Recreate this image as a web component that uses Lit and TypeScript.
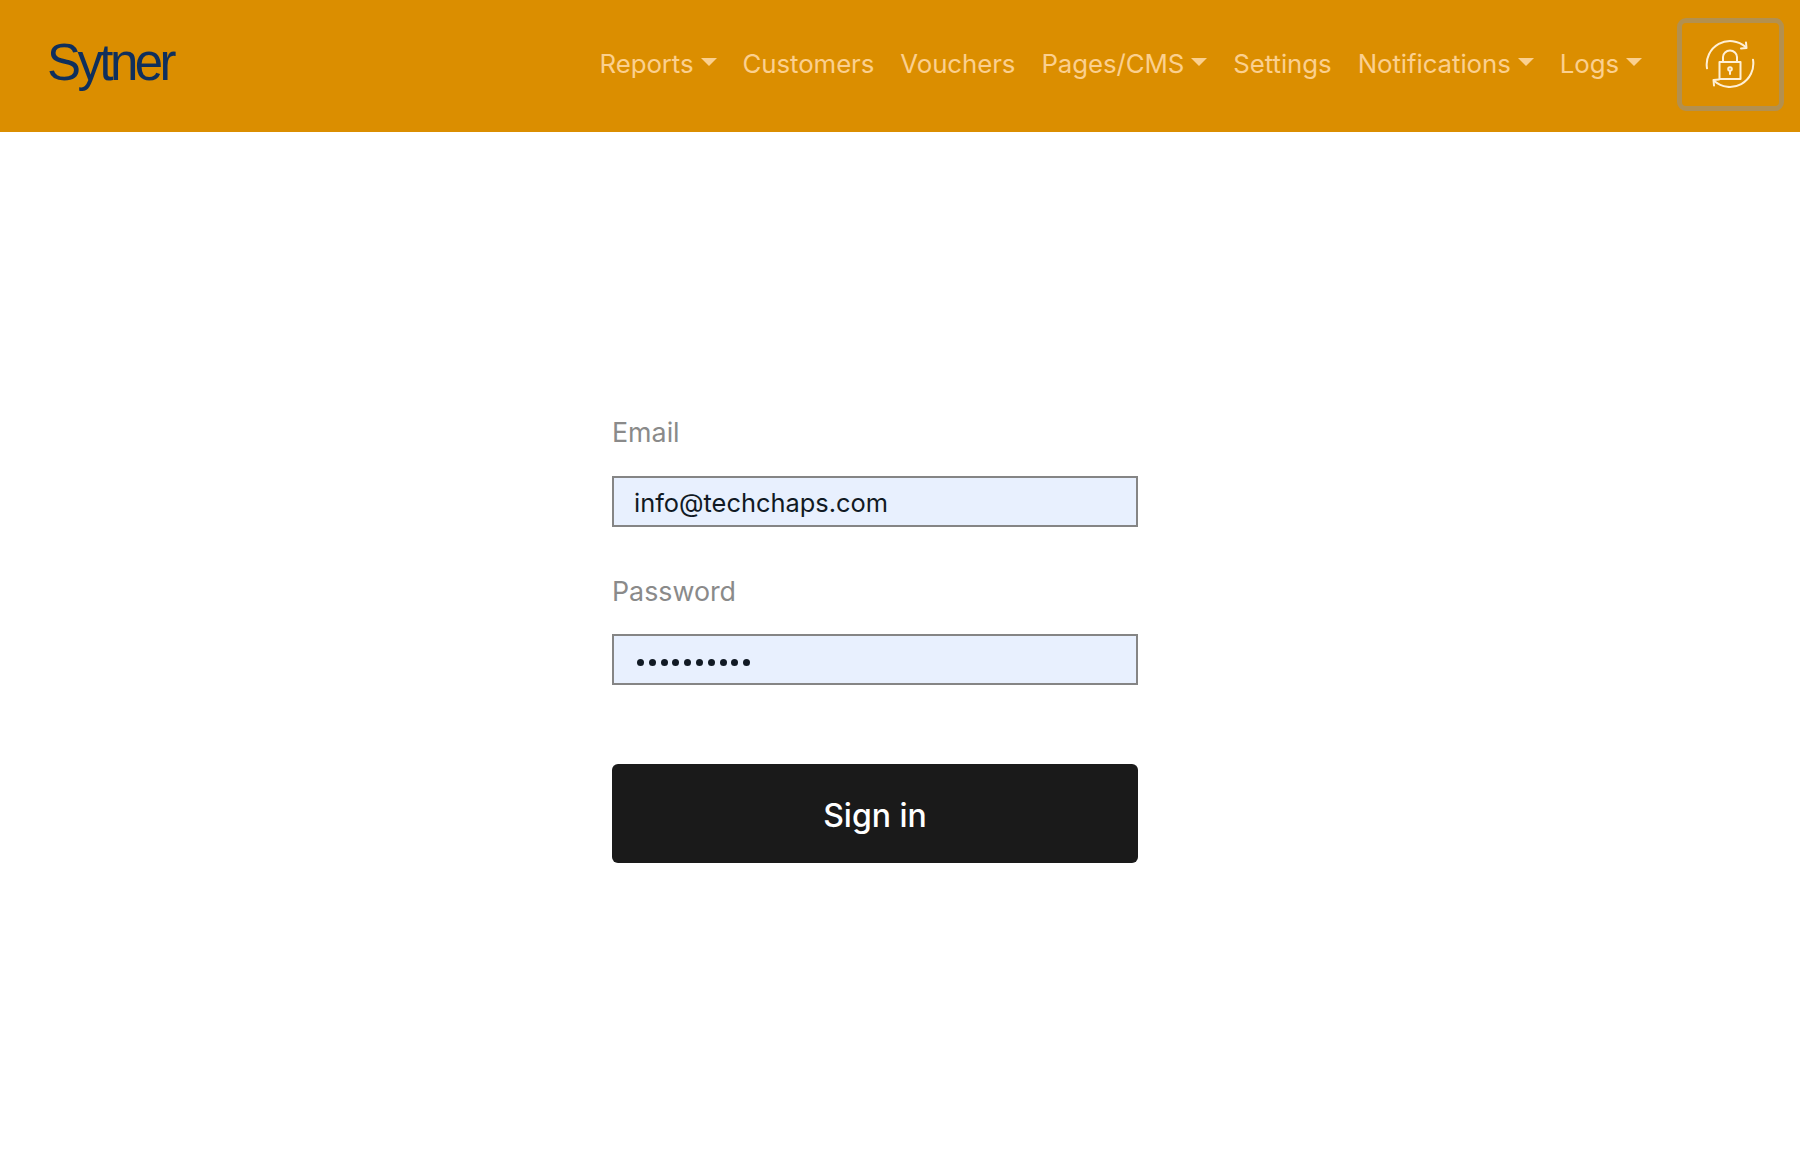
import { LitElement, html, css } from "lit";
import { customElement } from "lit/decorators.js";

const items: [string, boolean][] = [
  ["Reports", true], ["Customers", false], ["Vouchers", false], ["Pages/CMS", true],
  ["Settings", false], ["Notifications", true], ["Logs", true],
];

@customElement("app-root")
export class AppRoot extends LitElement {
  static styles = css`
    :host { display: block; min-height: 1174px; background: #fff; font-family: Inter, "Liberation Sans", sans-serif; }
    .nav { height: 132px; background: #db8e00; display: flex; align-items: center; padding: 0 16px 4px 47px; box-sizing: border-box; }
    .brand { font-family: "Liberation Sans", sans-serif; font-size: 51px; letter-spacing: -3.6px; color: #0f2f5c; line-height: 1; margin-right: auto; position: relative; top: -2px; }
    .links { display: flex; gap: 26px; align-items: center; margin-right: 35px; }
    .link { display: flex; align-items: center; font-size: 25.8px; line-height: 30px; height: 30px; color: #fbd08f; white-space: nowrap; letter-spacing: -0.06px; }
    .caret { width: 0; height: 0; margin-left: 7px; margin-top: -4px; border-top: 8px solid #fbd08f; border-left: 8px solid transparent; border-right: 8px solid transparent; }
    .toggler { width: 107px; height: 93px; box-sizing: border-box; border: 5px solid #b3904f; border-radius: 9px; display: flex; align-items: center; justify-content: center; }
    .toggler svg { display: block; margin-left: -2px; }
    .main { display: flex; justify-content: center; padding-top: 283px; padding-right: 50px; }
    form { width: 526px; display: flex; flex-direction: column; }
    label { font-size: 26.8px; color: #8a8a8a; line-height: 40px; margin-bottom: 21px; position: relative; top: -2px; }
    label:first-child { top: -3px; }
    .input { height: 51px; box-sizing: border-box; background: #e8f0fe; border: 2px solid #858585; display: flex; align-items: center; padding: 1px 0 0 20px; font-size: 25.4px; color: #111a24; margin-bottom: 46px; }
    .dots { display: flex; gap: 4.8px; padding: 5px 0 0 3px; }
    .dots i { width: 7px; height: 7px; border-radius: 50%; background: #111a24; display: block; }
    button { margin-top: 33px; height: 99px; border: 0; border-radius: 6px; background: #1a1a1a; color: #fff; font: 500 32px Inter, "Liberation Sans", sans-serif; padding: 3px 0 0; }
  `;

  render() {
    return html`
      <nav class="nav">
        <div class="brand">Sytner</div>
        <div class="links">
          ${items.map(([t, c]) => html`<span class="link">${t}${c ? html`<span class="caret"></span>` : ""}</span>`)}
        </div>
        <div class="toggler">
          <svg width="50" height="50" viewBox="0 0 50 50" fill="none" stroke="#fff0d6" stroke-width="2" stroke-linecap="round" stroke-linejoin="round">
            <path d="M2 29.3 A23.4 23.4 0 0 1 40.7 8"/>
            <path d="M48 20.7 A23.4 23.4 0 0 1 9.3 42"/>
            <path d="M36 9.5 L41.5 9 L41 3.5"/>
            <path d="M14 40.5 L8.5 41 L9 46.5"/>
            <rect x="14.5" y="23" width="21" height="17"/>
            <path d="M18 23 V18 A7 6.5 0 0 1 32 18 V23"/>
            <circle cx="25" cy="30" r="1.8"/>
            <path d="M25 32 V35"/>
          </svg>
        </div>
      </nav>
      <div class="main">
        <form>
          <label>Email</label>
          <div class="input">info@techchaps.com</div>
          <label>Password</label>
          <div class="input"><div class="dots">${Array.from({ length: 10 }, () => html`<i></i>`)}</div></div>
          <button type="button">Sign in</button>
        </form>
      </div>
    `;
  }
}
